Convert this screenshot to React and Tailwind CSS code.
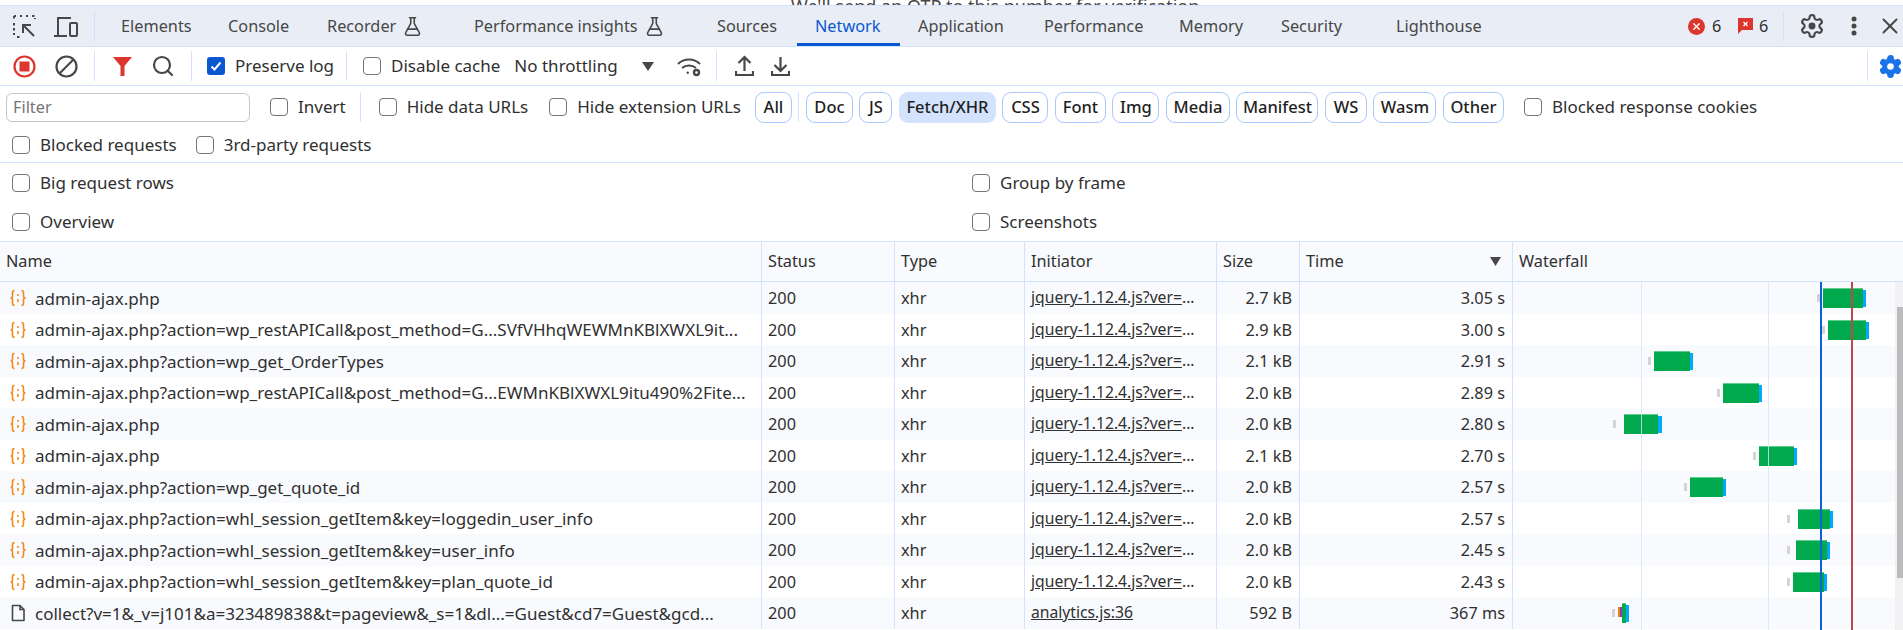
import React from 'react';
import { FlaskConical, Search, X } from 'lucide-react';

const rows = [
  { name: 'admin-ajax.php', size: '2.7 kB', time: '3.05 s', stub: 1817, start: 1823, end: 1863, tail: 1866 },
  { name: 'admin-ajax.php?action=wp_restAPICall&post_method=G...SVfVHhqWEWMnKBlXWXL9it...', size: '2.9 kB', time: '3.00 s', stub: 1822, start: 1828, end: 1866, tail: 1869 },
  { name: 'admin-ajax.php?action=wp_get_OrderTypes', size: '2.1 kB', time: '2.91 s', stub: 1648, start: 1654, end: 1690, tail: 1693 },
  { name: 'admin-ajax.php?action=wp_restAPICall&post_method=G...EWMnKBlXWXL9itu490%2Fite...', size: '2.0 kB', time: '2.89 s', stub: 1717, start: 1723, end: 1759, tail: 1762 },
  { name: 'admin-ajax.php', size: '2.0 kB', time: '2.80 s', stub: 1613, start: 1624, end: 1658, tail: 1662 },
  { name: 'admin-ajax.php', size: '2.1 kB', time: '2.70 s', stub: 1753, start: 1759, end: 1794, tail: 1797 },
  { name: 'admin-ajax.php?action=wp_get_quote_id', size: '2.0 kB', time: '2.57 s', stub: 1684, start: 1690, end: 1723, tail: 1726 },
  { name: 'admin-ajax.php?action=whl_session_getItem&key=loggedin_user_info', size: '2.0 kB', time: '2.57 s', stub: 1787, start: 1798, end: 1830, tail: 1833 },
  { name: 'admin-ajax.php?action=whl_session_getItem&key=user_info', size: '2.0 kB', time: '2.45 s', stub: 1787, start: 1796, end: 1827, tail: 1830 },
  { name: 'admin-ajax.php?action=whl_session_getItem&key=plan_quote_id', size: '2.0 kB', time: '2.43 s', stub: 1787, start: 1793, end: 1824, tail: 1827 },
  { name: 'collect?v=1&_v=j101&a=323489838&t=pageview&_s=1&dl...=Guest&cd7=Guest&gcd...', size: '592 B', time: '367 ms', stub: 1612, start: 1622, end: 1626, tail: 1629, doc: true },
];

const WATERFALL_LEFT = 1513;

function FetchIcon() {
  return (
    <svg width="20" height="20" viewBox="0 0 20 20" fill="none" stroke="#f28b1d" strokeWidth="1.6" className="shrink-0">
      <path d="M6.5 2.5C4.5 2.5 4.5 3.5 4.5 5v3c0 1-.5 2-2 2 1.5 0 2 1 2 2v3c0 1.500 0 2.500 2 2.500" />
      <path d="M13.500 2.500c2 0 2 1 2 2.500v3c0 1 .5 2 2 2-1.500 0-2 1-2 2v3c0 1.500 0 2.500-2 2.500" />
      <circle cx="10" cy="7" r="1" fill="#f28b1d" stroke="none" />
      <path d="M10 11v3" />
    </svg>
  );
}

function DocIcon() {
  return (
    <svg width="20" height="20" viewBox="0 0 20 20" fill="none" stroke="#474747" strokeWidth="1.6" className="shrink-0">
      <path d="M4.500 2.500h7.500l4 4v11h-11.500z" strokeLinejoin="round" />
      <path d="M12 2.500v4h4" />
    </svg>
  );
}

function Gear({ size, color, hub, strokeWidth, className }) {
  return (
    <svg width={size} height={size} viewBox="0 0 24 24" fill={hub ? 'none' : color} stroke={color} strokeWidth={strokeWidth} className={`shrink-0 ${className || ''}`}>
      <path d="M12.220 2h-.44a2 2 0 0 0-2 2v.18a2 2 0 0 1-1 1.730l-.43.25a2 2 0 0 1-2 0l-.15-.08a2 2 0 0 0-2.730.73l-.22.38a2 2 0 0 0 .73 2.730l.15.1a2 2 0 0 1 1 1.720v.51a2 2 0 0 1-1 1.740l-.15.09a2 2 0 0 0-.73 2.730l.22.38a2 2 0 0 0 2.730.73l.15-.08a2 2 0 0 1 2 0l.43.25a2 2 0 0 1 1 1.730V20a2 2 0 0 0 2 2h.44a2 2 0 0 0 2-2v-.18a2 2 0 0 1 1-1.730l.43-.25a2 2 0 0 1 2 0l.15.08a2 2 0 0 0 2.730-.73l.22-.39a2 2 0 0 0-.73-2.730l-.15-.08a2 2 0 0 1-1-1.740v-.5a2 2 0 0 1 1-1.740l.15-.09a2 2 0 0 0 .73-2.730l-.22-.38a2 2 0 0 0-2.730-.73l-.15.08a2 2 0 0 1-2 0l-.43-.25a2 2 0 0 1-1-1.730V4a2 2 0 0 0-2-2z" />
      <circle cx="12" cy="12" r="3.200" fill={hub ? color : '#fff'} stroke="none" />
    </svg>
  );
}

function Check({ checked }) {
  if (checked) {
    return (
      <span className="w-[18px] h-[18px] rounded-[3px] bg-[#0b57d0] flex items-center justify-center shrink-0">
        <svg width="14" height="14" viewBox="0 0 14 14" fill="none" stroke="#fff" strokeWidth="2"><path d="M2.500 7.500l3 3 6-7" /></svg>
      </span>
    );
  }
  return <span className="w-[18px] h-[18px] rounded-[4px] border-[1.5px] border-[#757575] bg-white shrink-0" />;
}

function CheckLabel({ label, checked, className }) {
  return (
    <div className={`flex items-center gap-[10px] shrink-0 text-[17px] ${className || ''}`}>
      <Check checked={checked} />
      <span className="whitespace-nowrap">{label}</span>
    </div>
  );
}

function Divider({ className }) {
  return <span className={`w-px h-[30px] bg-[#d3e3fd] shrink-0 ${className || ''}`} />;
}

function Tab({ label, width, active, flask }) {
  return (
    <div
      className={`h-full flex items-center shrink-0 pl-[18px] ${active ? 'text-[#0b57d0] border-b-[3px] border-[#0b57d0] pt-[3px]' : 'text-[#474747]'}`}
      style={{ width }}
    >
      <span className="whitespace-nowrap">{label}</span>
      {flask && <FlaskConical size={21} strokeWidth={1.8} className="ml-[6px] text-[#474747] shrink-0" />}
    </div>
  );
}

function Chip({ label, width, active }) {
  return (
    <div
      className={`h-[31px] rounded-[9px] flex items-center justify-center font-medium text-[16.5px] text-[#1f1f1f] shrink-0 ${active ? 'bg-[#d3e3fd]' : 'border border-[#a8c7fa]'}`}
      style={{ width }}
    >
      {label}
    </div>
  );
}

function Bars({ row }) {
  const short = row.doc;
  return (
    <>
      <div className="absolute top-[12px] h-[8px] w-[3px] bg-[#d4d4d4]" style={{ left: row.stub - WATERFALL_LEFT }} />
      {short && <div className="absolute top-[10px] h-[10px] w-[2px] bg-[#e08a00]" style={{ left: 1618 - WATERFALL_LEFT }} />}
      {short && <div className="absolute top-[10px] h-[10px] w-[2px] bg-[#9b30c8]" style={{ left: 1620 - WATERFALL_LEFT }} />}
      <div className="absolute top-[6px] h-[20px] bg-[#00a94b] border-t border-[#5dcc8e]" style={{ left: row.start - WATERFALL_LEFT, width: row.end - row.start }} />
      <div className="absolute top-[8px] h-[17px] bg-[#00aaff]" style={{ left: row.end - WATERFALL_LEFT, width: row.tail - row.end }} />
    </>
  );
}

function Row({ row, index }) {
  const cell = 'h-full flex items-center px-[7px] pt-px border-r border-[#d3e3fd] whitespace-nowrap overflow-hidden';
  return (
    <div className={`grid grid-cols-[762px_133px_130px_192px_83px_213px_382px] h-[31.5px] ${index % 2 === 0 ? 'bg-[#f8fafd]' : 'bg-white'}`}>
      <div className={`${cell} gap-[7px] pl-[8px] text-[17px]`}>
        {row.doc ? <DocIcon /> : <FetchIcon />}
        <span>{row.name}</span>
      </div>
      <div className={`${cell} pl-[6px]`}>200</div>
      <div className={`${cell} pl-[6px]`}>xhr</div>
      <div className={`${cell} pl-[6px] text-[15.7px]`}>
        {row.doc ? (
          <span className="underline">analytics.js:36</span>
        ) : (
          <span><span className="underline">jquery-1.12.4.js?ver=</span>...</span>
        )}
      </div>
      <div className={`${cell} justify-end`}>{row.size}</div>
      <div className={`${cell} justify-end`}>{row.time}</div>
      <div className="relative h-full">
        <Bars row={row} />
      </div>
    </div>
  );
}

export default function App() {
  return (
    <div className="w-[1903px] h-[630px] overflow-hidden bg-white text-[#303030] text-[16.3px] font-['Noto_Sans',sans-serif] flex flex-col">
      {/* page behind devtools */}
      <div className="h-[5px] overflow-hidden shrink-0 pl-[791px] text-[#474747] text-[18px] leading-[12px] whitespace-nowrap">
        We'll send an OTP to this number for verification
      </div>

      {/* tab bar */}
      <div className="h-[42px] shrink-0 flex items-center bg-[#e9eef6] border-y border-[#d3e3fd]">
        <div className="w-[13px] shrink-0" />
        <svg width="23" height="23" viewBox="0 0 23 23" fill="none" stroke="#474747" strokeWidth="2" className="shrink-0">
          <path d="M1 8v12M1 1h2M7 1h2M13 1h2M19 1h3v3M1 1v3M4 22h3" strokeDasharray="2.500 2.500" />
          <path d="M21 21L10 10M10 18v-8h8" />
        </svg>
        <svg width="25" height="23" viewBox="0 0 25 23" fill="none" stroke="#474747" strokeWidth="2" className="ml-[18px] shrink-0">
          <path d="M4 20V3h13M0 21h13" />
          <rect x="16" y="8" width="7" height="13" rx="1" />
        </svg>
        <Divider className="ml-[15px]" />
        <div className="w-[8px] shrink-0" />
        <Tab label="Elements" width={107} />
        <Tab label="Console" width={99} />
        <Tab label="Recorder" width={147} flask />
        <Tab label="Performance insights" width={243} flask />
        <Tab label="Sources" width={98} />
        <Tab label="Network" width={103} active />
        <Tab label="Application" width={126} />
        <Tab label="Performance" width={135} />
        <Tab label="Memory" width={102} />
        <Tab label="Security" width={115} />
        <Tab label="Lighthouse" width={310} />
        <div className="w-[17px] h-[17px] rounded-full bg-[#dc362e] flex items-center justify-center shrink-0">
          <X size={11} strokeWidth={3} className="text-white" />
        </div>
        <span className="ml-[7px] w-[26px] shrink-0 text-[#303030]">6</span>
        <svg width="15" height="16" viewBox="0 0 15 16" className="shrink-0">
          <path d="M0 0h15v12H4l-4 4z" fill="#dc362e" />
          <path d="M5.500 4l4 4M9.500 4l-4 4" stroke="#fff" strokeWidth="1.300" />
        </svg>
        <span className="ml-[6px] w-[24px] shrink-0 text-[#303030]">6</span>
        <Divider />
        <Gear size={26} color="#474747" strokeWidth={2} hub className="ml-[15px]" />
        <svg width="6" height="20" viewBox="0 0 6 20" fill="#474747" className="ml-[26px] shrink-0">
          <circle cx="3" cy="3" r="2.500" /><circle cx="3" cy="10" r="2.500" /><circle cx="3" cy="17" r="2.500" />
        </svg>
        <X size={26} strokeWidth={1.800} className="ml-[20px] text-[#474747] shrink-0" />
      </div>

      {/* network toolbar */}
      <div className="h-[39px] shrink-0 flex items-center border-b border-[#d3e3fd]">
        <svg width="23" height="23" viewBox="0 0 23 23" className="ml-[13px] shrink-0">
          <circle cx="11.500" cy="11.500" r="10" fill="none" stroke="#dc362e" strokeWidth="2.200" />
          <rect x="6.500" y="6.500" width="10" height="10" fill="#dc362e" />
        </svg>
        <svg width="23" height="23" viewBox="0 0 23 23" fill="none" stroke="#474747" strokeWidth="2.200" className="ml-[19px] shrink-0">
          <circle cx="11.500" cy="11.500" r="10" />
          <path d="M18.500 4.500l-14 14" />
        </svg>
        <Divider className="ml-[16px]" />
        <svg width="19" height="22" viewBox="0 0 19 22" fill="#dc362e" className="ml-[18px] shrink-0">
          <path d="M0 2h19l-7.500 9v10h-4V11z" />
        </svg>
        <Search size={24} strokeWidth={2.200} className="ml-[19px] text-[#474747] shrink-0" />
        <Divider className="ml-[16px]" />
        <CheckLabel label="Preserve log" checked className="ml-[15px]" />
        <Divider className="ml-[12px]" />
        <CheckLabel label="Disable cache" className="ml-[16px]" />
        <span className="ml-[14px] w-[128px] whitespace-nowrap shrink-0 text-[17px]">No throttling</span>
        <svg width="12" height="9" viewBox="0 0 12 9" fill="#474747" className="shrink-0"><path d="M0 0h12L6 9z" /></svg>
        <svg width="25" height="21" viewBox="0 0 25 21" fill="none" stroke="#474747" strokeWidth="2" className="ml-[23px] shrink-0">
          <path d="M1 8c6-6 16-6 22 0M5 12c4-3.500 10-3.500 14 0M10 16l1.500 1.500" />
          <circle cx="19.500" cy="16.500" r="2.500" strokeWidth="2.400" />
        </svg>
        <Divider className="ml-[14px]" />
        <svg width="19" height="22" viewBox="0 0 19 22" fill="none" stroke="#474747" strokeWidth="2.200" className="ml-[18px] shrink-0">
          <path d="M9.500 16V2M3.500 8l6-6 6 6M1 16v4h17v-4" />
        </svg>
        <svg width="19" height="22" viewBox="0 0 19 22" fill="none" stroke="#474747" strokeWidth="2.200" className="ml-[17px] shrink-0">
          <path d="M9.500 2v14M3.500 10l6 6 6-6M1 16v4h17v-4" />
        </svg>
        <div className="flex-1" />
        <Divider />
        <Gear size={25} color="#1a73e8" strokeWidth={2} className="ml-[10px]" />
      </div>

      {/* filter rows */}
      <div className="h-[77px] shrink-0 border-b border-[#d3e3fd] flex flex-col">
        <div className="h-[42px] flex items-center shrink-0">
          <div className="ml-[6px] w-[244px] h-[29px] border border-[#c4c7c5] rounded-[6px] flex items-center pl-[6px] text-[#757575] shrink-0">Filter</div>
          <CheckLabel label="Invert" className="ml-[20px]" />
          <Divider className="ml-[14px]" />
          <CheckLabel label="Hide data URLs" className="ml-[18px]" />
          <CheckLabel label="Hide extension URLs" className="ml-[21px]" />
          <div className="w-[14px] shrink-0" />
          <Chip label="All" width={37} />
          <Divider className="ml-[6px]" />
          <div className="ml-[7px] flex items-center gap-[6.500px] shrink-0">
            <Chip label="Doc" width={47} />
            <Chip label="JS" width={33} />
            <Chip label="Fetch/XHR" width={97} active />
            <Chip label="CSS" width={46} />
            <Chip label="Font" width={51} />
            <Chip label="Img" width={47} />
            <Chip label="Media" width={64} />
            <Chip label="Manifest" width={82} />
            <Chip label="WS" width={42} />
            <Chip label="Wasm" width={63} />
            <Chip label="Other" width={61} />
          </div>
          <CheckLabel label="Blocked response cookies" className="ml-[20px]" />
        </div>
        <div className="h-[33px] flex items-center shrink-0 pl-[12px]">
          <CheckLabel label="Blocked requests" />
          <CheckLabel label="3rd-party requests" className="ml-[19px]" />
        </div>
      </div>

      {/* settings */}
      <div className="h-[78px] shrink-0 grid grid-cols-[960px_1fr] grid-rows-2 items-center pl-[12px]">
        <CheckLabel label="Big request rows" />
        <CheckLabel label="Group by frame" />
        <CheckLabel label="Overview" />
        <CheckLabel label="Screenshots" />
      </div>

      {/* table header */}
      <div className="h-[41px] shrink-0 grid grid-cols-[762px_133px_130px_192px_83px_213px_1fr] bg-[#f8fafd] border-y border-[#d3e3fd]">
        {['Name', 'Status', 'Type', 'Initiator', 'Size'].map((h) => (
          <div key={h} className="h-full flex items-center px-[6px] border-r border-[#d3e3fd]">{h}</div>
        ))}
        <div className="h-full flex items-center justify-between pl-[6px] pr-[11px] border-r border-[#d3e3fd]">
          Time
          <svg width="11" height="9" viewBox="0 0 11 9" fill="#474747"><path d="M0 0h11L5.500 9z" /></svg>
        </div>
        <div className="h-full flex items-center px-[6px]">Waterfall</div>
      </div>

      {/* table body */}
      <div className="flex flex-1 min-h-0">
        <div className="relative w-[1895px] shrink-0">
          {rows.map((row, i) => (
            <Row key={i} row={row} index={i} />
          ))}
          {/* timeline markers */}
          <div className="absolute top-0 bottom-0 left-[1641px] w-px bg-[#d3e3fd]/80" />
          <div className="absolute top-0 bottom-0 left-[1768px] w-px bg-[#d3e3fd]/80" />
          <div className="absolute top-0 bottom-0 left-[1820px] w-[1.5px] bg-[#0b62d6]" />
          <div className="absolute top-0 bottom-0 left-[1851px] w-[2px] bg-[#b84a4a]" />
        </div>
        <div className="w-[8px] bg-[#f1f1f1] pl-[2px] pt-[25px]">
          <div className="w-[6px] h-[271px] bg-[#bcbcbc]" />
        </div>
      </div>
    </div>
  );
}
